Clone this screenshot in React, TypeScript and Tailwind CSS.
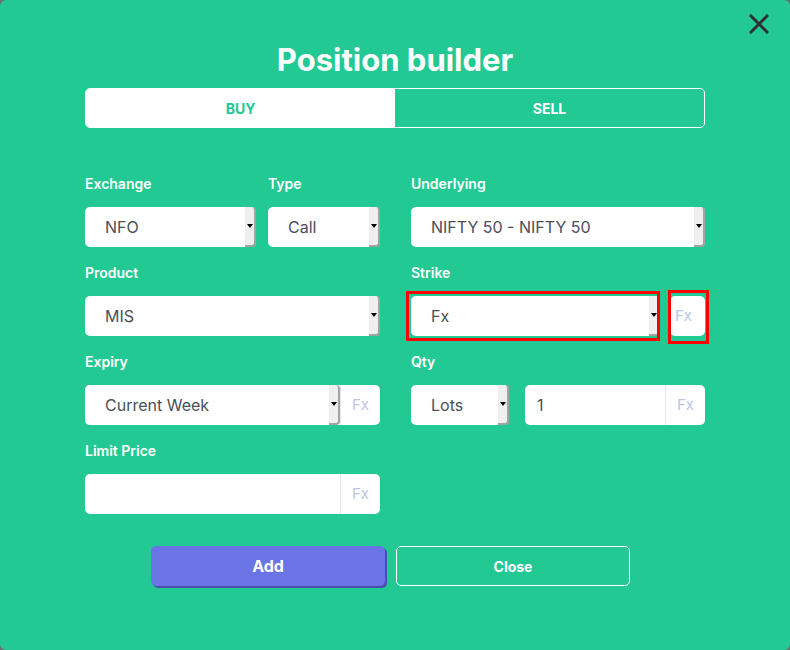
import React from "react";

function Arrow() {
  return (
    <div className="w-[11px] self-stretch bg-[#efefef] border-r-2 border-b-2 border-[#a3a3a3] rounded-r-[4px] flex items-center justify-center">
      <div className="w-0 h-0 border-l-[3px] border-r-[3px] border-t-[4px] border-l-transparent border-r-transparent border-t-black" />
    </div>
  );
}

function Select({ value, className = "", roundRight = true }: { value: string; className?: string; roundRight?: boolean }) {
  return (
    <div className={`h-10 bg-white flex items-stretch ${roundRight ? "rounded-[5px]" : "rounded-l-[5px]"} ${className}`}>
      <div className="flex-1 flex items-center pl-5 text-[16px] text-[#4a4f57]">{value}</div>
      <Arrow />
    </div>
  );
}

function Fx({ className = "" }: { className?: string }) {
  return (
    <div className={`w-10 h-10 flex items-center justify-center text-[15px] text-[#b8c6e4] ${className}`}>Fx</div>
  );
}

function Label({ children }: { children: React.ReactNode }) {
  return <div className="text-[14px] font-semibold text-white h-5 leading-5 mb-[13px]">{children}</div>;
}

export default function App() {
  return (
    <div className="w-[790px] h-[650px] bg-[#6e6e6e] font-['Inter',sans-serif]">
      <div className="relative w-full h-full bg-[#22c993] rounded-[6px] px-[85px] pt-[40px]">
        <button className="absolute right-[21px] top-[14px] w-[20px] h-[20px]">
          <svg viewBox="0 0 20 20" width="20" height="20">
            <path d="M2 2 L18 18 M18 2 L2 18" stroke="#2f2f2f" strokeWidth="3" strokeLinecap="square" />
          </svg>
        </button>
        <h1 className="text-center text-white font-bold text-[31px] leading-[40px] h-[40px]">Position builder</h1>
        <div className="mt-[8px] h-10 flex rounded-[5px] border border-white overflow-hidden">
          <div className="flex-1 bg-white flex items-center justify-center text-[#22c993] font-bold text-[14px]">BUY</div>
          <div className="flex-1 flex items-center justify-center text-white font-bold text-[14px]">SELL</div>
        </div>

        <div className="mt-[46px] grid grid-cols-[295px_294px] gap-x-[31px] gap-y-[16px]">
          {/* row 1 */}
          <div className="flex gap-[12px]">
            <div className="w-[171px]">
              <Label>Exchange</Label>
              <Select value="NFO" />
            </div>
            <div className="flex-1">
              <Label>Type</Label>
              <Select value="Call" />
            </div>
          </div>
          <div>
            <Label>Underlying</Label>
            <Select value="NIFTY 50 - NIFTY 50" />
          </div>

          {/* row 2 */}
          <div>
            <Label>Product</Label>
            <Select value="MIS" />
          </div>
          <div>
            <Label>Strike</Label>
            <div className="relative flex gap-[10px]">
              <Select value="Fx" className="w-[249px]" />
              <div className="w-[35px] h-10 bg-white rounded-[5px] flex items-center justify-start pl-[5px] text-[15px] text-[#b8c6e4]">Fx</div>
              <div className="absolute left-[-5px] top-[-5px] w-[254px] h-[50px] border-[3px] border-[#ff0000]" />
              <div className="absolute left-[257px] top-[-6px] w-[41px] h-[54px] border-[3px] border-[#ff0000]" />
            </div>
          </div>

          {/* row 3 */}
          <div>
            <Label>Expiry</Label>
            <div className="flex bg-white rounded-[5px]">
              <Select value="Current Week" className="flex-1" roundRight={false} />
              <Fx className="border-l border-[#e4e7ee]" />
            </div>
          </div>
          <div>
            <Label>Qty</Label>
            <div className="flex gap-[16px]">
              <Select value="Lots" className="w-[98px]" />
              <div className="flex-1 h-10 bg-white rounded-[5px] flex">
                <div className="flex-1 flex items-center pl-3 text-[16px] text-[#4a4f57]">1</div>
                <Fx className="border-l border-[#e4e7ee]" />
              </div>
            </div>
          </div>

          {/* row 4 */}
          <div>
            <Label>Limit Price</Label>
            <div className="h-10 bg-white rounded-[5px] flex">
              <div className="flex-1" />
              <Fx className="border-l border-[#e4e7ee]" />
            </div>
          </div>
          <div />
        </div>

        <div className="mt-[32px] ml-[66px] flex gap-[11px]">
          <button className="w-[234px] h-10 rounded-[5px] bg-[#6a74e4] shadow-[2px_2px_0_#4a4fae] text-white font-bold text-[16px]">Add</button>
          <button className="w-[234px] h-10 rounded-[5px] border border-white text-white font-bold text-[14px]">Close</button>
        </div>
      </div>
    </div>
  );
}
